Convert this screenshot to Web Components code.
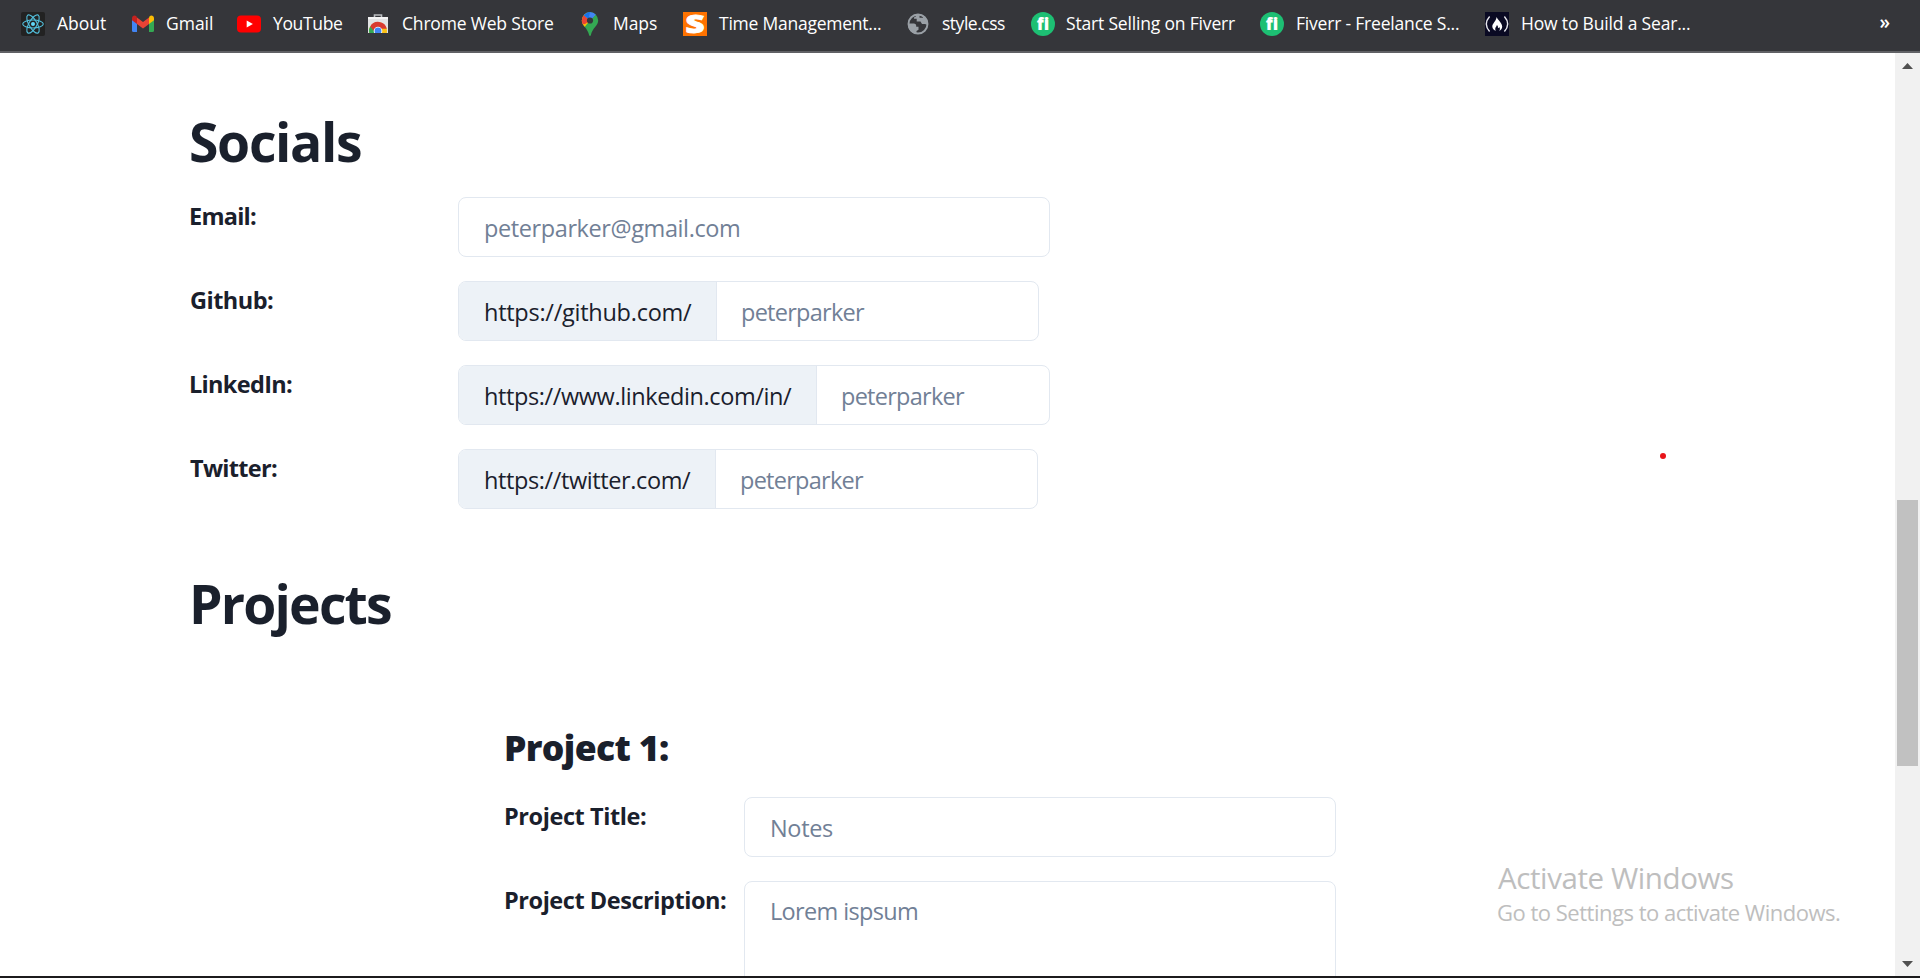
<!DOCTYPE html>
<html lang="en">
<head>
<meta charset="utf-8">
<title>Portfolio form</title>
<style>
html,body{margin:0;height:100%;overflow:hidden;background:#fff;font-family:"Open Sans","Noto Sans",sans-serif;color:#1a202c}
</style>
</head>
<body>
<app-window></app-window>
<script>
const define = (name, html, init) => customElements.define(name, class extends HTMLElement {
  connectedCallback() {
    if (this.shadowRoot) return;
    this.attachShadow({ mode: 'open' }).innerHTML = html;
    if (init) init(this, this.shadowRoot);
  }
});

/* A single line of text tracked so that its ink fills the given width. */
define('ink-text', `<style>:host{display:block;white-space:nowrap;flex:none}span{display:inline-block}</style><span><slot></slot></span>`, (el, root) => {
  const span = root.querySelector('span'), text = el.textContent, w = +el.getAttribute('w');
  el.style.width = w + 'px';
  const cs = getComputedStyle(span), c = document.createElement('canvas').getContext('2d');
  c.font = `${cs.fontWeight} ${cs.fontSize} ${cs.fontFamily}`;
  const m = c.measureText(text);
  span.style.letterSpacing = (w - m.actualBoundingBoxRight - m.actualBoundingBoxLeft) / (text.length - 1) + 'px';
  span.style.marginLeft = m.actualBoundingBoxLeft + 'px';
});

const icons = {
  react: `<rect width="24" height="24" rx="2" fill="#222"/><g fill="none" stroke="#53c1de" stroke-width="1.1"><ellipse cx="12" cy="12" rx="10.3" ry="4"/><ellipse cx="12" cy="12" rx="10.3" ry="4" transform="rotate(60 12 12)"/><ellipse cx="12" cy="12" rx="10.3" ry="4" transform="rotate(120 12 12)"/></g><circle cx="12" cy="12" r="2" fill="#61dafb"/>`,
  gmail: `<path d="M1 6v12.500q0 1.500 1.500 1.500H6V10z" fill="#4285f4"/><path d="M18 10v10h3.500q1.500 0 1.500-1.500V6z" fill="#34a853"/><path d="M18 5.500V12l5-3.700V6.200c0-2.500-2.600-3.500-4.200-2.200z" fill="#fbbc04"/><path d="M6 12V5.500l6 4.500 6-4.500V12l-6 4.500z" fill="#ea4335"/><path d="M1 6.200v2.100L6 12V5.500L5.200 4C3.600 2.700 1 3.700 1 6.200z" fill="#c5221f"/>`,
  youtube: `<rect y="3.600" width="24" height="16.800" rx="4" fill="#f00"/><path d="M9.700 8.500v7l6.200-3.500z" fill="#fff"/>`,
  store: `<path d="M8.500 6V3h7v3" fill="none" stroke="#b9bcbf" stroke-width="1.600"/><path d="M2 5h20v16H2z" fill="#e2e3e4"/><path d="M2 5h20v2H2z" fill="#f4f4f4"/><clipPath id="c"><path d="M2 5h20v16H2z"/></clipPath><g clip-path="url(#c)"><circle cx="12" cy="19" r="9" fill="#fbc116"/><path d="M12 19 4.200 14.500A9 9 0 0 0 8 27z" fill="#34a853"/><path d="M4.200 14.500a9 9 0 0 1 16.600 2.200H12L8 19z" fill="#d83a30"/><circle cx="12" cy="19" r="4.300" fill="#fff"/><circle cx="12" cy="19" r="3.400" fill="#4285f4"/></g>`,
  maps: `<clipPath id="m"><path d="M12 .3a8.200 8.200 0 0 0-8.200 8.200c0 5 5.700 7.400 7.300 14.500.3 1.300 1.500 1.300 1.800 0 1.600-7.100 7.300-9.500 7.300-14.500A8.200 8.200 0 0 0 12 .3z"/></clipPath><g clip-path="url(#m)"><path d="M0 0h24v24H0z" fill="#34a853"/><path d="M12 8.500 4 18H0V0h9z" fill="#fbbc04"/><path d="M5.500 3 12 8.500 19.500 0H6z" fill="#4285f4"/><path d="M12 8.500 5.500 3 0 6v8l3-1.500 4-.5z" fill="#ea4335"/><path d="M5.500 3 12 8.500 15 5 12-1z" fill="#1a73e8"/><path d="M13 7.500 18.500 2 12 0l-1 5z" fill="#4285f4"/></g><circle cx="12" cy="8.500" r="3.100" fill="#35363a"/>`,
  s: `<path d="M0 0h24v24H0z" fill="#ff7300"/><text x="12" y="21" text-anchor="middle" font-family="Open Sans" font-size="25" font-weight="800" fill="#fff" stroke="#fff" stroke-width=".9" textLength="19" lengthAdjust="spacingAndGlyphs">S</text>`,
  globe: `<circle cx="12" cy="12" r="9.500" fill="none" stroke="#9aa0a6" stroke-width="1.900"/><path d="M2.500 11.500h5.200c1.900 0 2.500 1 2.500 2.300v1h2.300v3l-2 1.300v2.700C5.500 21.500 2 17.500 2 12zM10 2.500v2c-1.500 0-2 .8-2 2.200h2.700v2.800h3.800l1.500 2.500h3l2.500 1A9.800 9.800 0 0 0 17 3.300v2.400h-3.500V2.300z" fill="#9aa0a6"/>`,
  fiverr: `<circle cx="12" cy="12" r="12" fill="#1dbf73"/><text x="12" y="18" text-anchor="middle" font-family="Open Sans" font-size="17" font-weight="800" fill="#fff" textLength="12.500" lengthAdjust="spacingAndGlyphs" style="font-variant-ligatures:none">fi</text>`,
  fcc: `<path d="M0 0h24v24H0z" fill="#0a0a23"/><path d="M4.600 4.500q-6.600 7.500 0 15M19.400 4.500q6.600 7.500 0 15" fill="none" stroke="#e8e8ee" stroke-width="1.400"/><path d="M11.500 5c1.200 2.800 5.700 6 5.700 9.400 0 2.300-1.300 3.700-3.200 4.400 1.200-1.300 1.200-2.700.2-3.900-.4.900-.8 1.100-1.300 1.100.4-1.400-.3-2.500-1-3-.2 1.600-1.700 2.200-1.700 3.900 0 .8.300 1.300.8 1.900-2-.6-3.700-2-3.700-4.400 0-3.300 4.100-5 4.200-9.400z" fill="#fff"/>`
};

define('book-mark', `<style>
:host{display:flex;flex:none;height:48px;align-items:center}
svg{width:24px;height:24px;flex:none;display:block;overflow:visible}
</style><svg viewBox="0 0 24 24"></svg><slot></slot>`, (el, root) => {
  el.style.width = el.getAttribute('span') + 'px';
  el.style.gap = (el.getAttribute('gap') || 12) + 'px';
  root.querySelector('svg').innerHTML = icons[el.getAttribute('icon')];
});

const marks = [['react',110,12,49,'About'],['gmail',106,12,45,'Gmail'],['youtube',129,12,69,'YouTube'],['store',212,13,150,'Chrome Web Store'],['maps',105,12,43,'Maps'],['s',223,12,162,'Time Management...'],['globe',125,12,63,'style.css'],['fiverr',229,11,169,'Start Selling on Fiverr'],['fiverr',225,13,162,'Fiverr - Freelance S...'],['fcc',220,13,168,'How to Build a Sear...']];
define('bookmark-bar', `<style>
:host{display:flex;height:51px;background:#35363a;border-bottom:2px solid #606165;padding:0 30px 0 21px;color:#fff;font-size:17.500px;flex:none}
ink-text{line-height:46px}
.more{margin-left:auto;font-size:19px;font-weight:600;line-height:44px}
book-mark ink-text{align-self:flex-start}
</style>` + marks.map(([i,s,g,w,t]) => `<book-mark icon="${i}" span="${s}" gap="${g}"><ink-text w="${w}">${t}</ink-text></book-mark>`).join('') + `<span class="more">»</span>`);

define('form-row', `<style>
:host{display:grid;grid-template-columns:var(--label,268px) auto;justify-content:start;font-size:23.500px}
.label{font-weight:700;line-height:38px;padding-left:var(--lead,1px)}
</style><div class="label"><slot name="label"></slot></div><slot></slot>`);

define('text-field', `<style>
:host{display:flex;box-sizing:border-box;height:60px;border:1px solid #e2e8f0;border-radius:8px;line-height:60px;overflow:hidden;color:#718096}
:host([multi]){height:120px;line-height:58px}
.pre{display:none;box-sizing:border-box;background:#edf2f7;border-right:1px solid #e2e8f0;color:#1a202c;padding-left:27px}
.in{padding-left:27px}
:host([prefix]) .pre{display:block}
:host([prefix]) .in{padding-left:26px}
</style><div class="pre"><slot name="prefix"></slot></div><div class="in"><slot></slot></div>`, (el, root) => {
  el.style.width = el.getAttribute('w') + 'px';
  root.querySelector('.pre').style.width = (el.getAttribute('prefix') || 0) + 'px';
});

define('section-title', `<style>:host{display:block;font-size:53.500px;font-weight:700;line-height:64px}</style><slot></slot>`);

define('portfolio-form', `<style>
:host{display:block;flex:1;min-width:0;overflow:hidden;padding:57px 0 0 190px;box-sizing:border-box}
.rows{display:grid;gap:24px;margin-top:23px}
.projects{margin-top:63px;padding-left:3px}
.socials{padding-left:1px}
.card{margin:89px 0 0 314px}
.card .name{font-size:35.500px;font-weight:800;line-height:44px;padding-left:2px}
.card .rows{margin-top:28px;--label:240px;--lead:2px}
.flush{--lead:0px}
</style>
<section-title class="socials"><ink-text w="170">Socials</ink-text></section-title>
<div class="rows">
<form-row><ink-text slot="label" w="65">Email:</ink-text><text-field w="592"><ink-text w="253">peterparker@gmail.com</ink-text></text-field></form-row>
<form-row><ink-text slot="label" w="82">Github:</ink-text><text-field w="581" prefix="258"><ink-text slot="prefix" w="206">https://github.com/</ink-text><ink-text w="122">peterparker</ink-text></text-field></form-row>
<form-row><ink-text slot="label" w="101">LinkedIn:</ink-text><text-field w="592" prefix="358"><ink-text slot="prefix" w="306">https://www.linkedin.com/in/</ink-text><ink-text w="122">peterparker</ink-text></text-field></form-row>
<form-row class="flush"><ink-text slot="label" w="87">Twitter:</ink-text><text-field w="580" prefix="257"><ink-text slot="prefix" w="205">https://twitter.com/</ink-text><ink-text w="122">peterparker</ink-text></text-field></form-row>
</div>
<section-title class="projects"><ink-text w="198">Projects</ink-text></section-title>
<div class="card">
<div class="name"><ink-text w="162">Project 1:</ink-text></div>
<div class="rows">
<form-row><ink-text slot="label" w="140">Project Title:</ink-text><text-field w="592"><ink-text w="61">Notes</ink-text></text-field></form-row>
<form-row><ink-text slot="label" w="220">Project Description:</ink-text><text-field multi w="592"><ink-text w="145">Lorem ispsum</ink-text></text-field></form-row>
</div></div>`);

define('scroll-bar', `<style>
:host{display:flex;flex-direction:column;align-items:center;width:25px;flex:none;background:#f1f1f1;box-sizing:border-box;padding:10px 0 9px}
svg{width:11px;height:6px;display:block;fill:#505050}
.thumb{width:21px;height:266px;margin-top:431px;background:#c1c1c1}
.down{margin-top:auto}
</style><svg viewBox="0 0 11 6"><path d="M0 6 5.500 0 11 6z"/></svg><div class="thumb"></div><svg class="down" viewBox="0 0 11 6"><path d="M0 0h11L5.500 6z"/></svg>`);

define('activation-note', `<style>
:host{position:absolute;left:1498px;top:858px;color:#bebebe}
.a{font-size:29.500px;line-height:40px}
.b{font-size:22px;line-height:30px;margin-top:-1px}
</style><div class="a"><ink-text w="235">Activate Windows</ink-text></div><div class="b"><ink-text w="342">Go to Settings to activate Windows.</ink-text></div>`);

define('pointer-dot', `<style>:host{position:absolute;left:1660px;top:453px;width:6px;height:6px;border-radius:50%;background:#e8141a}</style>`);

define('app-window', `<style>
:host{display:flex;flex-direction:column;height:978px;width:1920px;overflow:hidden;position:relative}
.view{display:flex;height:923px;flex:none}
.edge{height:2px;background:#1c1b1d}
</style><bookmark-bar></bookmark-bar><div class="view"><portfolio-form></portfolio-form><scroll-bar></scroll-bar></div><div class="edge"></div><activation-note></activation-note><pointer-dot></pointer-dot>`);
</script>
</body>
</html>
